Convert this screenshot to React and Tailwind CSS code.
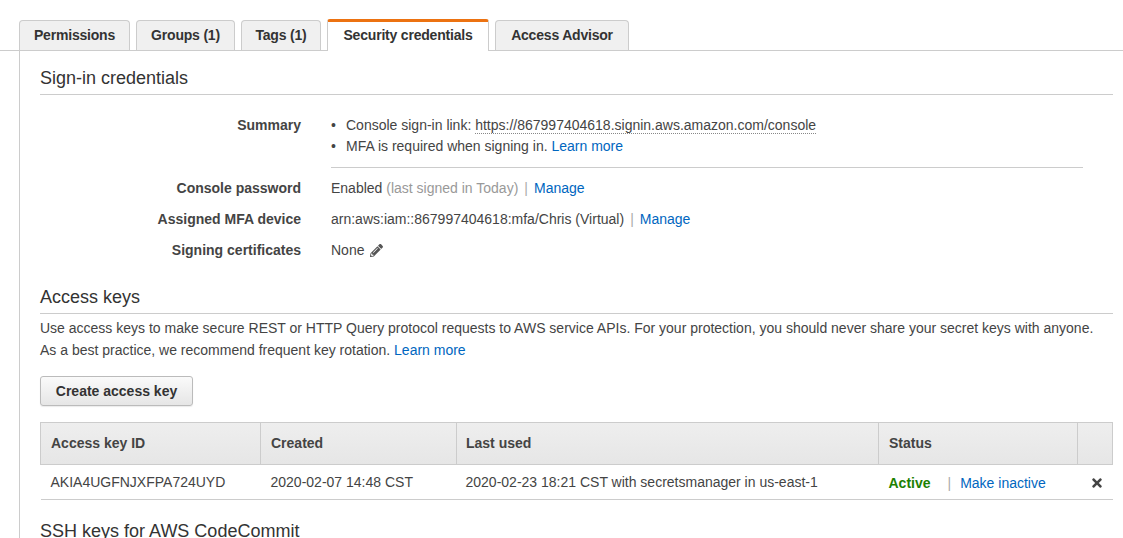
import { FaPencilAlt, FaTimes } from 'react-icons/fa';

const tabs = [
  { label: 'Permissions', w: 'w-[111px]' },
  { label: 'Groups (1)', w: 'w-[99px]' },
  { label: 'Tags (1)', w: 'w-[80px]' },
  { label: 'Security credentials', w: 'w-[162px]', active: true },
  { label: 'Access Advisor', w: 'w-[134px]' },
];

function Link({ children }) {
  return <a className="text-[#0066c0] cursor-pointer hover:underline">{children}</a>;
}

function Pipe() {
  return <span className="mx-[6px] text-[#aaa]">|</span>;
}

function Row({ label, children }) {
  return (
    <div className="flex items-start">
      <div className="w-[261px] shrink-0 text-right font-bold text-[#444]">{label}</div>
      <div className="ml-[30px]">{children}</div>
    </div>
  );
}

export default function App() {
  return (
    <div className="min-h-[538px] bg-white pt-[19px] text-[14px] leading-[21px] text-[#444]" style={{ fontFamily: '"Liberation Sans", Arial, sans-serif' }}>
      {/* tabs */}
      <div className="flex items-end gap-[6px] border-b border-[#ccc] pl-[19px]">
        {tabs.map((t) =>
          t.active ? (
            <div
              key={t.label}
              className={`${t.w} -mb-px h-[32px] rounded-t-[3px] border-x border-t-[3px] border-x-[#ccc] border-t-[#ec7211] bg-white pt-[3px] text-center font-bold tracking-[-0.2px] text-[#333]`}
            >
              {t.label}
            </div>
          ) : (
            <div
              key={t.label}
              className={`${t.w} h-[30px] rounded-t-[4px] border-x border-t border-[#ccc] bg-[#f0f0f0] pt-[4px] text-center font-bold tracking-[-0.2px] text-[#333]`}
            >
              {t.label}
            </div>
          )
        )}
      </div>

      {/* panel */}
      <div className="ml-[19px] border-l border-[#ccc] pl-[20px] pr-[10px] pt-[15px] pb-[10px]">
        <h2 className="border-b border-[#ccc] pb-[4px] text-[18px] leading-[24px] font-normal text-[#333]">
          Sign-in credentials
        </h2>

        <div className="mt-[20px] flex flex-col gap-[10px]">
          <Row label="Summary">
            <ul className="w-[752px] border-b border-[#ccc] pb-[10px]">
              <li className="flex">
                <span className="w-[15px]">•</span>
                <span>
                  Console sign-in link:{' '}
                  <span className="border-b border-dotted border-[#888]">
                    https://867997404618.signin.aws.amazon.com/console
                  </span>
                </span>
              </li>
              <li className="flex">
                <span className="w-[15px]">•</span>
                <span>
                  MFA is required when signing in. <Link>Learn more</Link>
                </span>
              </li>
            </ul>
          </Row>
          <Row label="Console password">
            Enabled <span className="text-[#999]">(last signed in Today)</span>
            <Pipe />
            <Link>Manage</Link>
          </Row>
          <Row label="Assigned MFA device">
            arn:aws:iam::867997404618:mfa/Chris (Virtual)
            <Pipe />
            <Link>Manage</Link>
          </Row>
          <Row label="Signing certificates">
            <span className="inline-flex items-center gap-[6px]">
              None <FaPencilAlt className="text-[13px] text-[#555]" />
            </span>
          </Row>
        </div>

        <h2 className="mt-[24px] border-b border-[#ccc] pb-[4px] text-[18px] leading-[24px] font-normal text-[#333]">
          Access keys
        </h2>
        <p className="mt-[3px] leading-[22px]">
          Use access keys to make secure REST or HTTP Query protocol requests to AWS service APIs. For your protection, you should never share your secret keys with anyone.
          <br />
          As a best practice, we recommend frequent key rotation. <Link>Learn more</Link>
        </p>

        <button
          type="button"
          className="mt-[15px] h-[30px] w-[153px] rounded-[3px] border border-[#bbb] bg-gradient-to-b from-[#fafafa] to-[#e6e6e6] font-bold text-[#333] shadow-[0_1px_1px_rgba(0,0,0,0.08)]"
        >
          Create access key
        </button>

        <table className="mt-[16px] w-full border-collapse text-left">
          <thead>
            <tr className="h-[42px] bg-gradient-to-b from-[#eeeeee] to-[#e6e6e6] text-[#444]">
              <th className="w-[220px] border border-[#ccc] pl-[10px] font-bold">Access key ID</th>
              <th className="w-[196px] border border-[#ccc] pl-[10px] font-bold">Created</th>
              <th className="w-[422px] border border-[#ccc] pl-[9px] font-bold">Last used</th>
              <th className="w-[199px] border border-[#ccc] pl-[10px] font-bold">Status</th>
              <th className="border border-[#ccc]"></th>
            </tr>
          </thead>
          <tbody>
            <tr className="h-[35px] border-b border-[#ccc]">
              <td className="pl-[10px]">AKIA4UGFNJXFPA724UYD</td>
              <td className="pl-[10px]">2020-02-07 14:48 CST</td>
              <td className="pl-[9px]">2020-02-23 18:21 CST with secretsmanager in us-east-1</td>
              <td className="pl-[10px] pt-[2px]">
                <span className="font-bold text-[#1d8102]">Active</span>
                <span className="ml-[17px] mr-[9px] text-[#aaa]">|</span>
                <Link>Make inactive</Link>
              </td>
              <td className="pt-[2px]">
                <div className="flex justify-end pr-[9px]">
                  <FaTimes className="text-[14px] text-[#444]" />
                </div>
              </td>
            </tr>
          </tbody>
        </table>

        <h2 className="mt-[19px] text-[18px] leading-[24px] font-normal text-[#333]">SSH keys for AWS CodeCommit</h2>
      </div>
    </div>
  );
}
